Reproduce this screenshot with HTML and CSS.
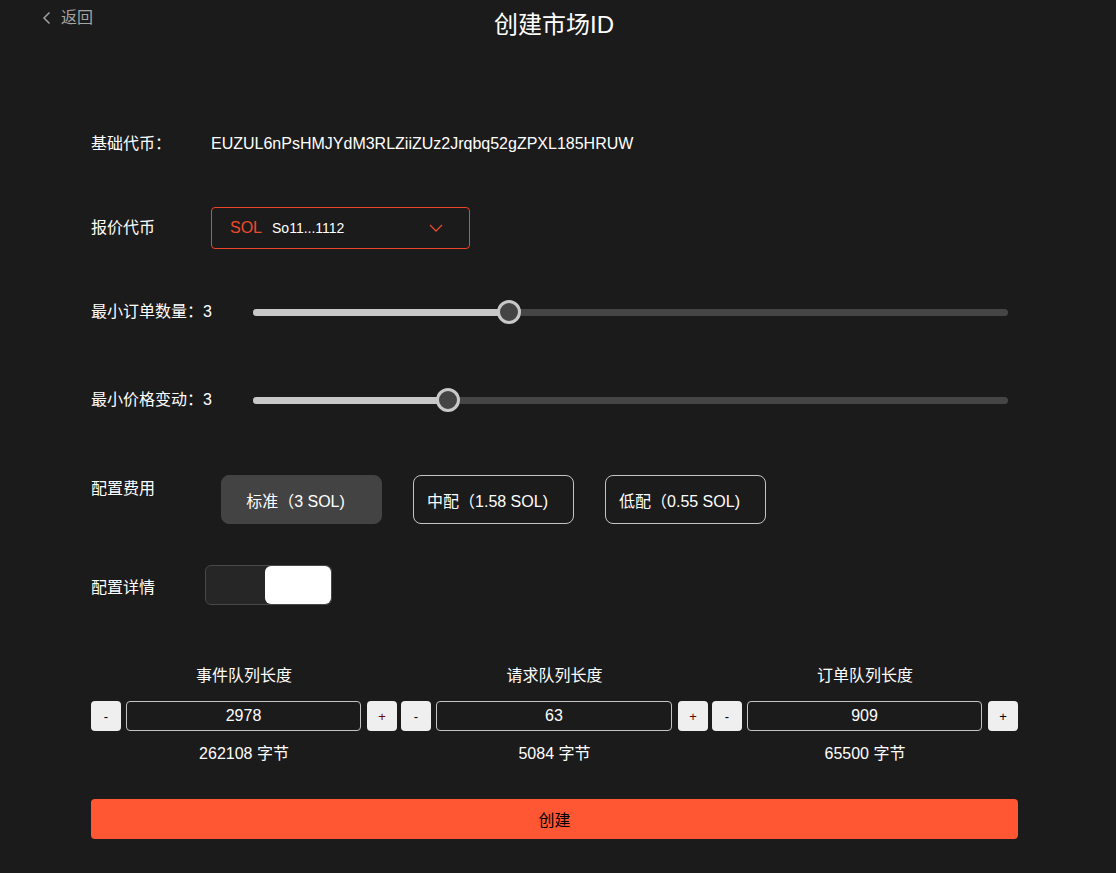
FILE: index.html
```html
<!DOCTYPE html>
<html lang="zh">
<head>
<meta charset="utf-8">
<title>创建市场ID</title>
<link rel="stylesheet" href="styles.css">
</head>
<body>
<header class="header">
  <a class="back" href="#">
    <svg class="back-icon" width="10" height="14" viewBox="0 0 10 14"><path d="M7.5 1.5 L2 7 L7.5 12.5" fill="none" stroke="#a0a0a0" stroke-width="1.5"/></svg>
    <span>返回</span>
  </a>
  <h1 class="title">创建市场ID</h1>
  <div></div>
</header>

<main class="form">
  <div class="row row-base">
    <div class="label label-base">基础代币：</div>
    <div class="value">EUZUL6nPsHMJYdM3RLZiiZUz2Jrqbq52gZPXL185HRUW</div>
  </div>

  <div class="row row-quote">
    <div class="label label-base">报价代币</div>
    <div class="select">
      <span class="sel-sym">SOL</span>
      <span class="sel-addr">So11...1112</span>
      <svg class="sel-arrow" width="14" height="8" viewBox="0 0 14 8"><path d="M1 1 L7 7 L13 1" fill="none" stroke="#e6492d" stroke-width="1.3"/></svg>
    </div>
  </div>

  <div class="row row-slider row-slider1">
    <div class="label label-slider">最小订单数量：3</div>
    <div class="slider">
      <div class="track"><div class="fill" style="width:33.9%"></div></div>
      <div class="thumb" style="left:33.9%"></div>
    </div>
  </div>

  <div class="row row-slider row-slider2">
    <div class="label label-slider">最小价格变动：3</div>
    <div class="slider">
      <div class="track"><div class="fill" style="width:25.8%"></div></div>
      <div class="thumb" style="left:25.8%"></div>
    </div>
  </div>

  <div class="row row-fee">
    <div class="label label-fee">配置费用</div>
    <div class="fee-options">
      <button class="fee fee-active">标准（3 SOL)</button>
      <button class="fee">中配（1.58 SOL)</button>
      <button class="fee">低配（0.55 SOL)</button>
    </div>
  </div>

  <div class="row row-toggle">
    <div class="label label-toggle">配置详情</div>
    <div class="toggle"><div class="knob"></div></div>
  </div>

  <div class="queues">
    <div class="queue">
      <div class="q-title">事件队列长度</div>
      <div class="q-ctrl">
        <button class="step">-</button>
        <input class="q-input" value="2978">
        <button class="step step-red">+</button>
      </div>
      <div class="q-bytes">262108 字节</div>
    </div>
    <div class="queue">
      <div class="q-title">请求队列长度</div>
      <div class="q-ctrl">
        <button class="step">-</button>
        <input class="q-input" value="63">
        <button class="step step-red">+</button>
      </div>
      <div class="q-bytes">5084 字节</div>
    </div>
    <div class="queue">
      <div class="q-title">订单队列长度</div>
      <div class="q-ctrl">
        <button class="step">-</button>
        <input class="q-input" value="909">
        <button class="step">+</button>
      </div>
      <div class="q-bytes">65500 字节</div>
    </div>
  </div>

  <button class="create">创建</button>
</main>
</body>
</html>
```

FILE: styles.css
```css
* { box-sizing: border-box; }

body {
  margin: 0;
  background: #1b1b1b;
  color: #fff;
  font-family: "Liberation Sans", Arial, "Noto Sans CJK SC", sans-serif;
  font-size: 16px;
  line-height: 20px;
}

.header {
  display: grid;
  grid-template-columns: 1fr auto 1fr;
  height: 50px;
}

.back {
  display: flex;
  align-items: center;
  gap: 9px;
  padding-left: 42px;
  padding-top: 8px;
  height: 20px;
  box-sizing: content-box;
  color: #a4a4a4;
  text-decoration: none;
  font-size: 16px;
}

.title {
  margin: 0;
  padding-top: 11px;
  font-size: 24px;
  line-height: 28px;
  font-weight: normal;
  padding-right: 8px;
}

.form {
  margin-left: 91px;
  width: 927px;
  display: flex;
  flex-direction: column;
}

.row {
  display: flex;
  align-items: center;
}

.row-base { margin-top: 84px; height: 20px; }
.label-base { width: 120px; }

.row-quote { margin-top: 53px; }

.select {
  width: 259px;
  height: 42px;
  border: 1px solid #ec4528;
  border-radius: 4px;
  display: flex;
  align-items: center;
  padding-left: 18px;
}
.sel-sym { color: #f04a2c; font-size: 16px; }
.sel-addr { font-size: 14px; margin-left: 10px; }
.sel-arrow { margin-left: auto; margin-right: 26px; }

.row-slider { height: 24px; }
.row-slider1 { margin-top: 51px; }
.row-slider2 { margin-top: 64px; }
.label-slider { width: 162px; }

.slider {
  position: relative;
  width: 755px;
  height: 24px;
  display: flex;
  align-items: center;
}
.track {
  width: 100%;
  height: 7px;
  border-radius: 4px;
  background: #454545;
  overflow: hidden;
}
.fill {
  height: 100%;
  background: #c8c8c8;
}
.thumb {
  position: absolute;
  top: 0;
  width: 24px;
  height: 24px;
  margin-left: -12px;
  border-radius: 50%;
  background: #444;
  border: 3px solid #c8c8c8;
}

.row-fee { margin-top: 63px; align-items: flex-start; }
.label-fee { width: 130px; padding-top: 4px; }
.fee-options { display: flex; gap: 31px; }
.fee {
  width: 161px;
  height: 49px;
  border-radius: 8px;
  border: 1px solid #c4c4c4;
  background: transparent;
  color: #fff;
  font-family: inherit;
  font-size: 16px;
  padding: 0 12px 0 0;
}
.fee-active {
  background: #434343;
  border-color: #434343;
}

.row-toggle { margin-top: 41px; }
.label-toggle { width: 114px; padding-top: 6px; }
.toggle {
  width: 127px;
  height: 40px;
  border: 1px solid #484848;
  border-radius: 6px;
  background: #262626;
  display: flex;
  justify-content: flex-end;
}
.knob {
  width: 66px;
  height: 38px;
  background: #fff;
  border-radius: 6px;
}

.queues {
  margin-top: 61px;
  display: grid;
  grid-template-columns: 306px 307px 306px;
  column-gap: 4px;
}
.queue { display: flex; flex-direction: column; align-items: stretch; }
.q-title { text-align: center; height: 20px; }
.q-ctrl {
  margin-top: 15px;
  display: flex;
  height: 30px;
}
.step {
  width: 30px;
  height: 30px;
  flex: none;
  border: none;
  border-radius: 4px;
  background: #efefef;
  color: #000;
  font-family: inherit;
  font-size: 13px;
  padding: 0;
}
.step-red { color: #6a0000; }
.q-input {
  flex: 1;
  min-width: 0;
  height: 30px;
  margin: 0 6px 0 5px;
  border: 1px solid #c4c4c4;
  border-radius: 4px;
  background: transparent;
  color: #fff;
  text-align: center;
  font-family: inherit;
  font-size: 16px;
}
.q-bytes { text-align: center; margin-top: 13px; height: 20px; }

.create {
  margin-top: 35px;
  height: 40px;
  border: none;
  border-radius: 4px;
  background: #ff5733;
  color: #000;
  font-family: inherit;
  font-size: 16px;
}
```
